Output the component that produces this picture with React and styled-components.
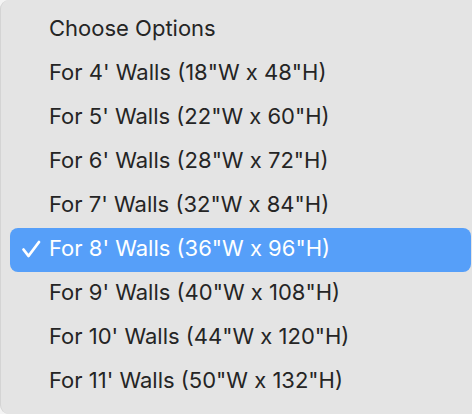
import React from 'react'
import styled, { createGlobalStyle } from 'styled-components'

const GlobalStyle = createGlobalStyle`
  html, body {
    margin: 0;
    padding: 0;
    background: #f4f4f4;
    overflow: hidden;
  }
`

const options = [
  `For 4' Walls (18"W x 48"H)`,
  `For 5' Walls (22"W x 60"H)`,
  `For 6' Walls (28"W x 72"H)`,
  `For 7' Walls (32"W x 84"H)`,
  `For 8' Walls (36"W x 96"H)`,
  `For 9' Walls (40"W x 108"H)`,
  `For 10' Walls (44"W x 120"H)`,
  `For 11' Walls (50"W x 132"H)`,
]

const Check = () => (
  <svg width="20" height="18" viewBox="0 0 20 18">
    <path
      d="M2.5 9.5 L7.5 16 L18 2"
      fill="none"
      stroke="#fff"
      strokeWidth="2.8"
      strokeLinecap="round"
      strokeLinejoin="round"
    />
  </svg>
)

export default function App() {
  const selected = 4
  return (
    <>
      <GlobalStyle />
      <Menu>
        <Item>
          <Mark />
          <Label>Choose Options</Label>
        </Item>
        {options.map((o, i) => (
          <Item key={o} active={i === selected}>
            <Mark>{i === selected && <Check />}</Mark>
            <Label>{o}</Label>
          </Item>
        ))}
      </Menu>
    </>
  )
}

const Menu = styled.div`
  width: 490px;
  height: 414px;
  box-sizing: border-box;
  background: #e4e4e4;
  border-radius: 9px 0 0 9px;
  border-left: 1px solid #d4d4d4;
  padding: 8px 0 0 9px;
  display: flex;
  flex-direction: column;
  font-family: Inter, "Liberation Sans", sans-serif;
`
const Item = styled.div`
  height: 44px;
  width: 461px;
  flex: none;
  display: flex;
  align-items: center;
  box-sizing: border-box;
  padding-bottom: 4px;
  border-radius: 8px;
  background: ${p => (p.active ? '#569ff9' : 'transparent')};
  color: ${p => (p.active ? '#ffffff' : '#252525')};
`
const Mark = styled.span`
  width: 39px;
  display: flex;
  justify-content: center;
  padding-left: 2px;
  padding-top: 2px;
  box-sizing: border-box;
`
const Label = styled.span`
  font-size: 22px;
  line-height: 28px;
`
